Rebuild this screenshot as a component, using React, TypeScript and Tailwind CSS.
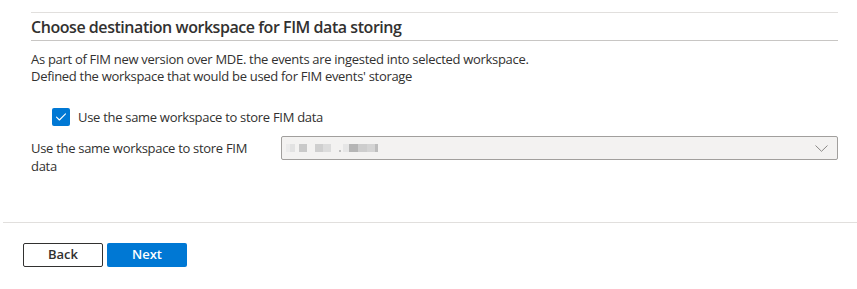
import React from "react";

const font = { fontFamily: '"Open Sans", "Noto Sans", Arial, sans-serif' };

const BlurredValue: React.FC = () => (
  <div className="flex items-center h-[8px] gap-0">
    <span className="w-[4px] h-[8px] bg-[#ebebeb]" />
    <span className="w-[5px] h-[8px] bg-[#e2e2e2]" />
    <span className="w-[8px] h-[8px] bg-[#c9c9c9] ml-[4px]" />
    <span className="w-[8px] h-[8px] bg-[#cfcfcf] ml-[8px]" />
    <span className="w-[8px] h-[8px] bg-[#dcdcdc]" />
    <span className="w-[2px] h-[2px] bg-[#c0c0c0] ml-[8px] self-end" />
    <span className="w-[6px] h-[8px] bg-[#e6e6e6] ml-[2px]" />
    <span className="w-[9px] h-[8px] bg-[#b5b5b5]" />
    <span className="w-[9px] h-[8px] bg-[#cdcdcd]" />
    <span className="w-[8px] h-[8px] bg-[#d4d4d4]" />
    <span className="w-[3px] h-[8px] bg-[#bdbdbd]" />
  </div>
);

export default function App() {
  return (
    <div className="w-[857px] h-[289px] bg-white text-[#323130] overflow-hidden" style={font}>
      <div className="pt-[12px] pl-[31px] pr-[19px]">
        <div className="border-t border-[#e1dfdd]">
          <h2 className="h-[27px] flex items-center text-[16px] font-semibold leading-[22px] tracking-[-0.45px] border-b border-[#c8c6c4] box-content">
            Choose destination workspace for FIM data storing
          </h2>
        </div>
        <p className="mt-[10px] text-[13px] leading-[17px] tracking-[-0.3px]">
          As part of FIM new version over MDE. the events are ingested into selected workspace.
          <br />
          Defined the workspace that would be used for FIM events' storage
        </p>

        <label className="mt-[23px] ml-[21px] flex items-center gap-[8px] text-[13px] leading-[18px] tracking-[-0.3px]">
          <span className="w-[18px] h-[18px] rounded-[2px] bg-[#0078d4] flex items-center justify-center">
            <svg width="12" height="10" viewBox="0 0 12 10" fill="none">
              <path d="M1.5 5.2 L4.4 8 L10.5 1.8" stroke="white" strokeWidth="1.1" strokeLinecap="round" strokeLinejoin="round" />
            </svg>
          </span>
          Use the same workspace to store FIM data
        </label>

        <div className="mt-[10px] grid grid-cols-[250px_1fr] items-start">
          <div className="text-[13px] leading-[18px] tracking-[-0.3px] max-w-[230px] pt-[3px]">
            Use the same workspace to store FIM data
          </div>
          <div className="h-[24px] border border-[#a19f9d] bg-[#f3f2f1] rounded-[2px] flex items-center pl-[4px] pr-[9px]">
            <BlurredValue />
            <svg className="ml-auto" width="13" height="7" viewBox="0 0 13 7" fill="none">
              <path d="M0.5 0.5 L6.5 6.3 L12.5 0.5" stroke="#8a8886" strokeWidth="1" />
            </svg>
          </div>
        </div>
      </div>

      <div className="mt-[47px] ml-[3px] border-t border-[#e1dfdd]" />

      <div className="mt-[20px] ml-[23px] flex gap-[4px]">
        <button className="w-[80px] h-[24px] border border-[#323130] rounded-[2px] bg-white text-[13px] font-semibold text-[#323130]">
          Back
        </button>
        <button className="w-[80px] h-[24px] rounded-[2px] bg-[#0078d4] text-[13px] font-semibold text-white">
          Next
        </button>
      </div>
    </div>
  );
}
